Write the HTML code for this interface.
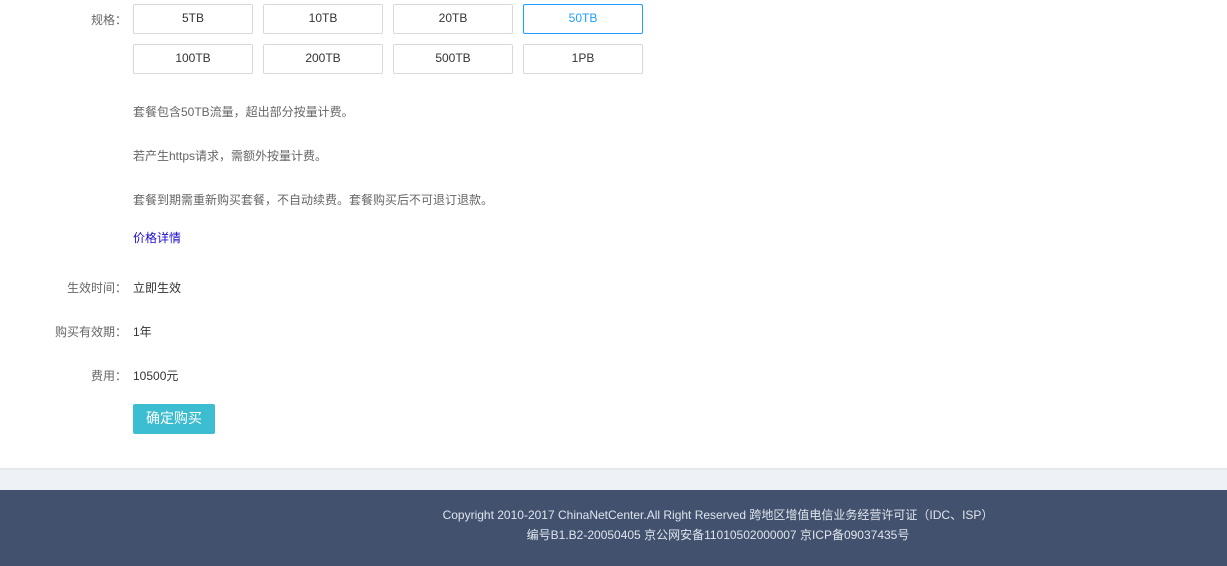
<!DOCTYPE html><html><head><meta charset="utf-8"><style>
body{margin:0;width:1227px;height:566px;overflow:hidden;font-family:"Liberation Sans","Noto Sans CJK SC",sans-serif;font-size:12px;background:#fff;}
.main{position:relative;height:468px;border-bottom:2px solid #e4e7eb;}
.a{position:absolute;white-space:nowrap;}
.lab{position:absolute;right:1100px;color:#666;white-space:nowrap;}
.b{position:absolute;width:118px;height:28px;border:1px solid #d9d9d9;border-radius:2px;text-align:center;line-height:28px;color:#333;}
.sel{border-color:#1e9fff;color:#1e9fff;}
.g{color:#666;}
.gray{height:20px;background:#eef2f7;}
.foot{height:76px;background:#42526e;color:#dfe4ec;text-align:center;padding-left:209px;box-sizing:border-box;}
</style></head><body>
<div class="main">
<div class="lab" style="top:11px">规格：</div>
<div class="b" style="left:133px;top:4px;line-height:27px">5TB</div>
<div class="b" style="left:263px;top:4px;line-height:27px">10TB</div>
<div class="b" style="left:393px;top:4px;line-height:27px">20TB</div>
<div class="b sel" style="left:523px;top:4px;line-height:27px">50TB</div>
<div class="b" style="left:133px;top:44px;line-height:27px">100TB</div>
<div class="b" style="left:263px;top:44px;line-height:27px">200TB</div>
<div class="b" style="left:393px;top:44px;line-height:27px">500TB</div>
<div class="b" style="left:523px;top:44px;line-height:27px">1PB</div>
<div class="a g" style="left:133px;top:103px">套餐包含50TB流量，超出部分按量计费。</div>
<div class="a g" style="left:133px;top:147px">若产生https请求，需额外按量计费。</div>
<div class="a g" style="left:133px;top:191px">套餐到期需重新购买套餐，不自动续费。套餐购买后不可退订退款。</div>
<div class="a" style="left:133px;top:229px;color:#1a0dcc">价格详情</div>
<div class="lab" style="top:279px">生效时间：</div><div class="a" style="left:133px;top:279px;color:#333">立即生效</div>
<div class="lab" style="top:323px">购买有效期：</div><div class="a" style="left:133px;top:323px;color:#333">1年</div>
<div class="lab" style="top:367px">费用：</div><div class="a" style="left:133px;top:367px;color:#333">10500元</div>
<div class="a" style="left:133px;top:404px;width:82px;height:30px;background:#3dbdd0;border-radius:2px;color:#fff;font-size:14px;text-align:center;line-height:29px">确定购买</div>
</div>
<div class="gray"></div>
<div class="foot"><div style="padding-top:15px;line-height:20px">Copyright 2010-2017 ChinaNetCenter.All Right Reserved 跨地区增值电信业务经营许可证（IDC、ISP）<br>编号B1.B2-20050405 京公网安备11010502000007 京ICP备09037435号</div></div>
</body></html>
